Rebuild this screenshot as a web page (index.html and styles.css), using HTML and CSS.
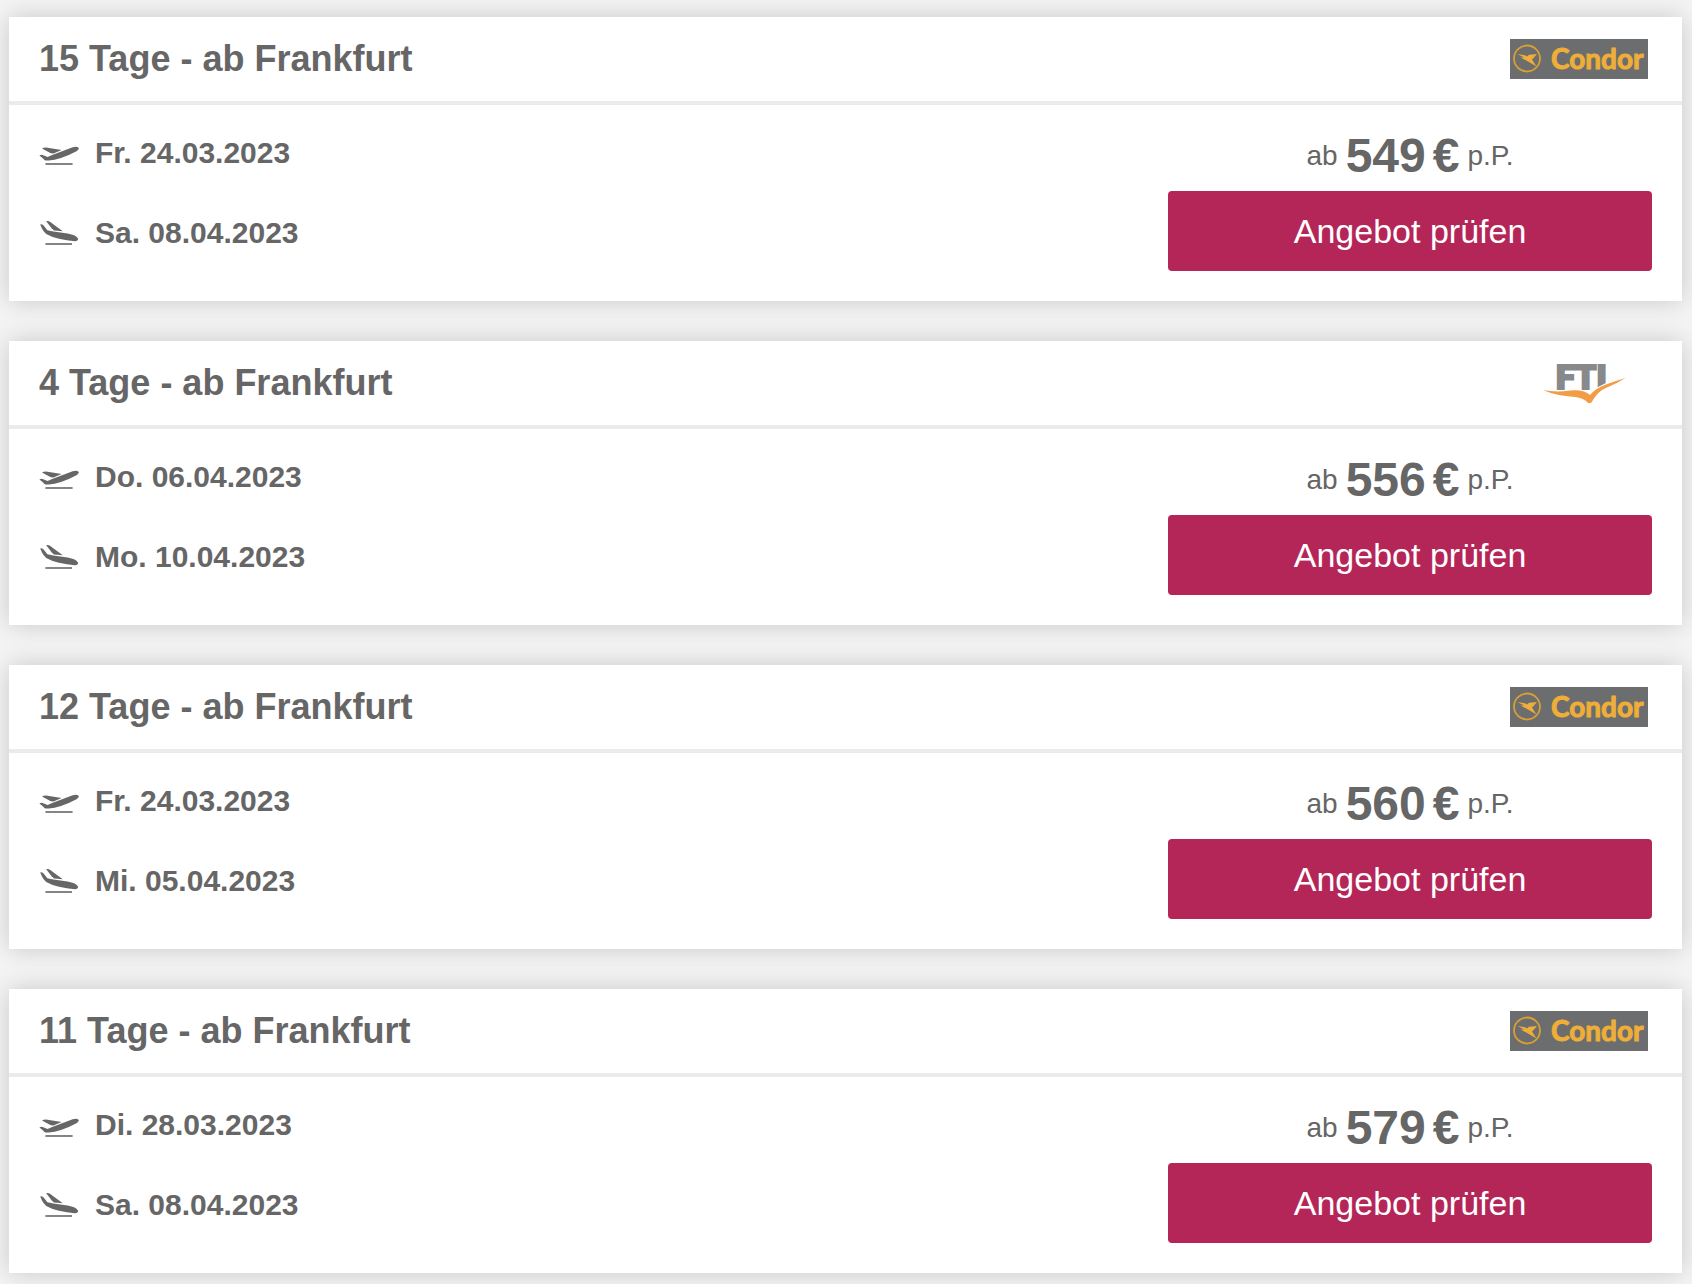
FILE: index.html
```html
<!DOCTYPE html>
<html lang="de">
<head>
<meta charset="utf-8">
<meta name="viewport" content="width=device-width, initial-scale=1">
<title>Reiseangebote ab Frankfurt</title>
<link rel="stylesheet" href="styles.css">
</head>
<body>
<svg class="sprite" aria-hidden="true">
  <symbol id="takeoff" viewBox="0 0 40 30">
    <path d="M3 10.6Q4.5 9.4 7 9.4L22.6 11.9L14.5 15.4L11.8 15.2Z"/>
    <path d="M.4 17.4Q2.6 16.4 4.2 17.2L8.6 19L12.5 17.2L33 9.4Q37.6 7.800 39.6 9.800Q40.4 11.4 37.5 13.2Q30 17.2 22 20Q15 22.2 10 22.4H6.6Q5.2 22.4 4.4 20.8Z"/>
    <path d="M6.4 25.2H33.6V26.8H6.4Z"/>
  </symbol>
  <symbol id="landing" viewBox="0 0 40 30">
    <path d="M7.2 3.2Q9.4 2.6 11.6 4.2L23.8 13.3L15 12.4L12.6 10.2Z"/>
    <path d="M1.2 6.4Q3 6 4.6 7.6L8.4 12.2L14.4 13.6L28.6 15.6Q37.4 17.2 39 20.6Q39.4 23.2 35.8 23.2Q28 22.8 20 20.8Q12 18.8 7.2 16Q4.4 13.8 3 10.6Z"/>
    <path d="M6.4 25.2H33V26.8H6.4Z"/>
  </symbol>
  <symbol id="condor" viewBox="0 0 138 40">
    <path fill="#6b6d6f" d="M0 0H138V40H0Z"/>
    <circle cx="17" cy="19.5" r="13" fill="none" stroke="#d99f35" stroke-width="1.8"/>
    <path fill="#eeae38" d="M7.500 15L15 16.200L17 17.500L19 15.800L27 15L24 18.500L22 20.500L26.500 27.500L18 22.500L10.500 18.500L14 18.600Z"/>
    <text class="condor-name" x="41" y="30">Condor</text>
  </symbol>
  <symbol id="fti" viewBox="0 0 138 40">
    <text class="fti-name" x="46" y="26">FTI</text>
    <path fill="#fff" d="M84 26L99 18.500V32H84Z"/>
    <path fill="#f39c46" d="M33 27Q46 29.500 60 27.500Q74 26 80 32Q86 25 96 21.500Q105 18 115.500 15Q107 20.500 97 24.500Q90 27 85 34L81 40H78Q74 35 65 34Q45 32.500 33 27Z"/>
  </symbol>
</svg>

<main class="offers">
  <article class="offer">
    <header class="offer-head">
      <h2 class="offer-title">15 Tage - ab Frankfurt</h2>
      <svg class="logo" role="img" aria-label="Condor"><use href="#condor"/></svg>
    </header>
    <div class="offer-body">
      <ul class="dates">
        <li class="date"><svg class="plane" aria-hidden="true"><use href="#takeoff"/></svg>Fr. 24.03.2023</li>
        <li class="date"><svg class="plane" aria-hidden="true"><use href="#landing"/></svg>Sa. 08.04.2023</li>
      </ul>
      <div class="booking">
        <p class="price">ab <strong class="amount"><span>549</span><span>€</span></strong> p.P.</p>
        <button class="check" type="button">Angebot prüfen</button>
      </div>
    </div>
  </article>

  <article class="offer">
    <header class="offer-head">
      <h2 class="offer-title">4 Tage - ab Frankfurt</h2>
      <svg class="logo" role="img" aria-label="FTI"><use href="#fti"/></svg>
    </header>
    <div class="offer-body">
      <ul class="dates">
        <li class="date"><svg class="plane" aria-hidden="true"><use href="#takeoff"/></svg>Do. 06.04.2023</li>
        <li class="date"><svg class="plane" aria-hidden="true"><use href="#landing"/></svg>Mo. 10.04.2023</li>
      </ul>
      <div class="booking">
        <p class="price">ab <strong class="amount"><span>556</span><span>€</span></strong> p.P.</p>
        <button class="check" type="button">Angebot prüfen</button>
      </div>
    </div>
  </article>

  <article class="offer">
    <header class="offer-head">
      <h2 class="offer-title">12 Tage - ab Frankfurt</h2>
      <svg class="logo" role="img" aria-label="Condor"><use href="#condor"/></svg>
    </header>
    <div class="offer-body">
      <ul class="dates">
        <li class="date"><svg class="plane" aria-hidden="true"><use href="#takeoff"/></svg>Fr. 24.03.2023</li>
        <li class="date"><svg class="plane" aria-hidden="true"><use href="#landing"/></svg>Mi. 05.04.2023</li>
      </ul>
      <div class="booking">
        <p class="price">ab <strong class="amount"><span>560</span><span>€</span></strong> p.P.</p>
        <button class="check" type="button">Angebot prüfen</button>
      </div>
    </div>
  </article>

  <article class="offer">
    <header class="offer-head">
      <h2 class="offer-title">11 Tage - ab Frankfurt</h2>
      <svg class="logo" role="img" aria-label="Condor"><use href="#condor"/></svg>
    </header>
    <div class="offer-body">
      <ul class="dates">
        <li class="date"><svg class="plane" aria-hidden="true"><use href="#takeoff"/></svg>Di. 28.03.2023</li>
        <li class="date"><svg class="plane" aria-hidden="true"><use href="#landing"/></svg>Sa. 08.04.2023</li>
      </ul>
      <div class="booking">
        <p class="price">ab <strong class="amount"><span>579</span><span>€</span></strong> p.P.</p>
        <button class="check" type="button">Angebot prüfen</button>
      </div>
    </div>
  </article>
</main>
</body>
</html>
```
FILE: styles.css
```css
* {
  box-sizing: border-box;
}

body {
  margin: 0;
  background: #f4f4f4;
  color: #666;
  font-family: "Liberation Sans", Arial, sans-serif;
}

.sprite {
  display: none;
}

.offers {
  display: flex;
  flex-direction: column;
  gap: 40px;
  padding: 17px 10px 11px 9px;
}

.offer {
  background: #fff;
  box-shadow: 0 0 24px rgba(0, 0, 0, 0.18);
}

.offer-head {
  display: flex;
  align-items: center;
  justify-content: space-between;
  padding: 22px 34px 22px 30px;
  border-bottom: 4px solid #ebebeb;
}

.offer-title {
  margin: 0;
  font-size: 36px;
  line-height: 40px;
}

.logo {
  width: 138px;
  height: 40px;
}

.condor-name {
  fill: #eeae38;
  stroke: #eeae38;
  stroke-width: 1px;
  font: 700 28px Lato, sans-serif;
}

.fti-name {
  fill: #88898b;
  stroke: #88898b;
  stroke-width: 2px;
  font: 900 34px Roboto, sans-serif;
}

.offer-body {
  display: flex;
  justify-content: space-between;
  padding: 30px;
}

.dates {
  display: flex;
  flex-direction: column;
  gap: 44px;
  margin: 0;
  padding: 0;
  list-style: none;
}

.date {
  display: flex;
  align-items: center;
  gap: 16px;
  font-size: 30px;
  font-weight: 700;
  line-height: 36px;
}

.plane {
  width: 40px;
  height: 30px;
  fill: #666;
}

.booking {
  display: flex;
  flex-direction: column;
  gap: 14px;
  width: 30%;
}

.price {
  display: flex;
  align-items: center;
  justify-content: center;
  gap: 8px;
  margin: 0;
  font-size: 28px;
  line-height: 42px;
}

.amount {
  display: flex;
  gap: 7px;
  font-size: 48px;
}

.check {
  height: 80px;
  padding: 0 16px;
  border: 0;
  border-radius: 4px;
  background: #b52658;
  color: #fff;
  font: 34px "Liberation Sans", Arial, sans-serif;
  cursor: pointer;
}
```
